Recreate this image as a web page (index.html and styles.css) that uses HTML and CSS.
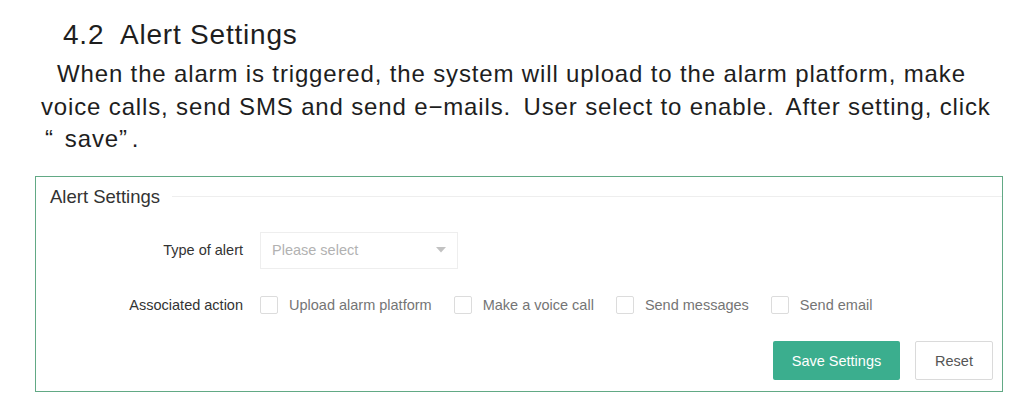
FILE: index.html
```html
<!DOCTYPE html>
<html lang="en">
<head>
<meta charset="utf-8">
<title>4.2 Alert Settings</title>
<link rel="stylesheet" href="styles.css">
</head>
<body>
<main class="doc">
  <h2 class="title">4.2  Alert Settings</h2>
  <div class="intro">
    <div class="line line1">When the alarm is triggered, the system will upload to the alarm platform, make</div>
    <div class="line line2">voice calls, send SMS and send e−mails<span class="stop">.</span> User select to enable<span class="stop">.</span> After setting, click</div>
    <div class="line line3"><span class="oq">“</span>save<span class="cq">”</span>.</div>
  </div>

  <section class="panel">
    <div class="legend">
      <span class="legend-text">Alert Settings</span>
      <span class="legend-line"></span>
    </div>
    <div class="form">
      <div class="row row-select">
        <label class="label">Type of alert</label>
        <div class="select">
          <span class="placeholder">Please select</span>
          <svg class="arrow" width="10" height="6" viewBox="0 0 10 6"><polygon points="0,0 10,0 5,5.5" fill="#c2c2c2"/></svg>
        </div>
      </div>
      <div class="row row-check">
        <label class="label">Associated action</label>
        <div class="checks">
          <span class="check"><span class="box"></span><span class="check-text">Upload alarm platform</span></span>
          <span class="check"><span class="box"></span><span class="check-text">Make a voice call</span></span>
          <span class="check"><span class="box"></span><span class="check-text">Send messages</span></span>
          <span class="check"><span class="box"></span><span class="check-text">Send email</span></span>
        </div>
      </div>
      <div class="actions">
        <button class="btn btn-primary" type="button">Save Settings</button>
        <button class="btn btn-plain" type="button">Reset</button>
      </div>
    </div>
  </section>
</main>
</body>
</html>
```
FILE: styles.css
```css
html, body {
  margin: 0;
  padding: 0;
  background: #ffffff;
}

.doc {
  padding-top: 19px;
  font-family: "Liberation Sans", Arial, sans-serif;
  color: #1e1e1e;
}

.title {
  margin: 0;
  padding-left: 63px;
  font-size: 28px;
  line-height: 32px;
  font-weight: normal;
  letter-spacing: 0.8px;
  white-space: pre;
}

.intro {
  margin-top: 7px;
  font-size: 24px;
  line-height: 32.5px;
  letter-spacing: 0.85px;
}

.line {
  white-space: nowrap;
}

.line1 { padding-left: 57px; }
.line2 { padding-left: 41px; }
.line3 { padding-left: 45px; }

.stop { margin-right: 5px; }

.oq { margin-right: 11px; }
.cq { margin-right: 4px; }

.panel {
  margin: 20px 0 0 35px;
  width: 968px;
  box-sizing: border-box;
  border: 1px solid #62a985;
  padding: 8px 9px 10px 0;
  font-size: 14.5px;
}

.legend {
  display: flex;
  align-items: center;
  height: 24px;
  padding-left: 14px;
}

.legend-text {
  font-size: 18.5px;
  line-height: 24px;
  color: #333333;
}

.legend-line {
  flex: 1;
  height: 1px;
  margin-left: 12px;
  margin-right: -9px;
  background: #eeeeee;
}

.form {
  margin-top: 23px;
  display: flex;
  flex-direction: column;
  gap: 17px;
}

.row {
  display: flex;
  align-items: center;
}

.row-select { height: 37px; }
.row-check { height: 38px; }

.label {
  width: 224px;
  box-sizing: border-box;
  padding-right: 17px;
  text-align: right;
  color: #333333;
}

.select {
  width: 198px;
  height: 37px;
  box-sizing: border-box;
  border: 1px solid #eeeeee;
  display: flex;
  align-items: center;
  justify-content: space-between;
  padding: 0 11px 0 11px;
  color: #b2b2b2;
}

.arrow { display: block; }

.checks {
  display: flex;
  align-items: center;
}

.check {
  display: flex;
  align-items: center;
  margin-right: 22px;
}

.box {
  width: 18px;
  height: 18px;
  box-sizing: border-box;
  border: 1px solid #dcdcdc;
  border-radius: 2px;
  margin-right: 11px;
}

.check-text {
  color: #757575;
}

.actions {
  display: flex;
  justify-content: flex-end;
  align-items: center;
  gap: 15px;
  height: 40px;
}

.btn {
  font-family: "Liberation Sans", Arial, sans-serif;
  font-size: 14.5px;
  height: 39px;
  border-radius: 2px;
  cursor: pointer;
}

.btn-primary {
  width: 127px;
  background: #3bae8e;
  border: none;
  color: #ffffff;
}

.btn-plain {
  width: 78px;
  background: #ffffff;
  border: 1px solid #dadada;
  color: #555555;
}
```
